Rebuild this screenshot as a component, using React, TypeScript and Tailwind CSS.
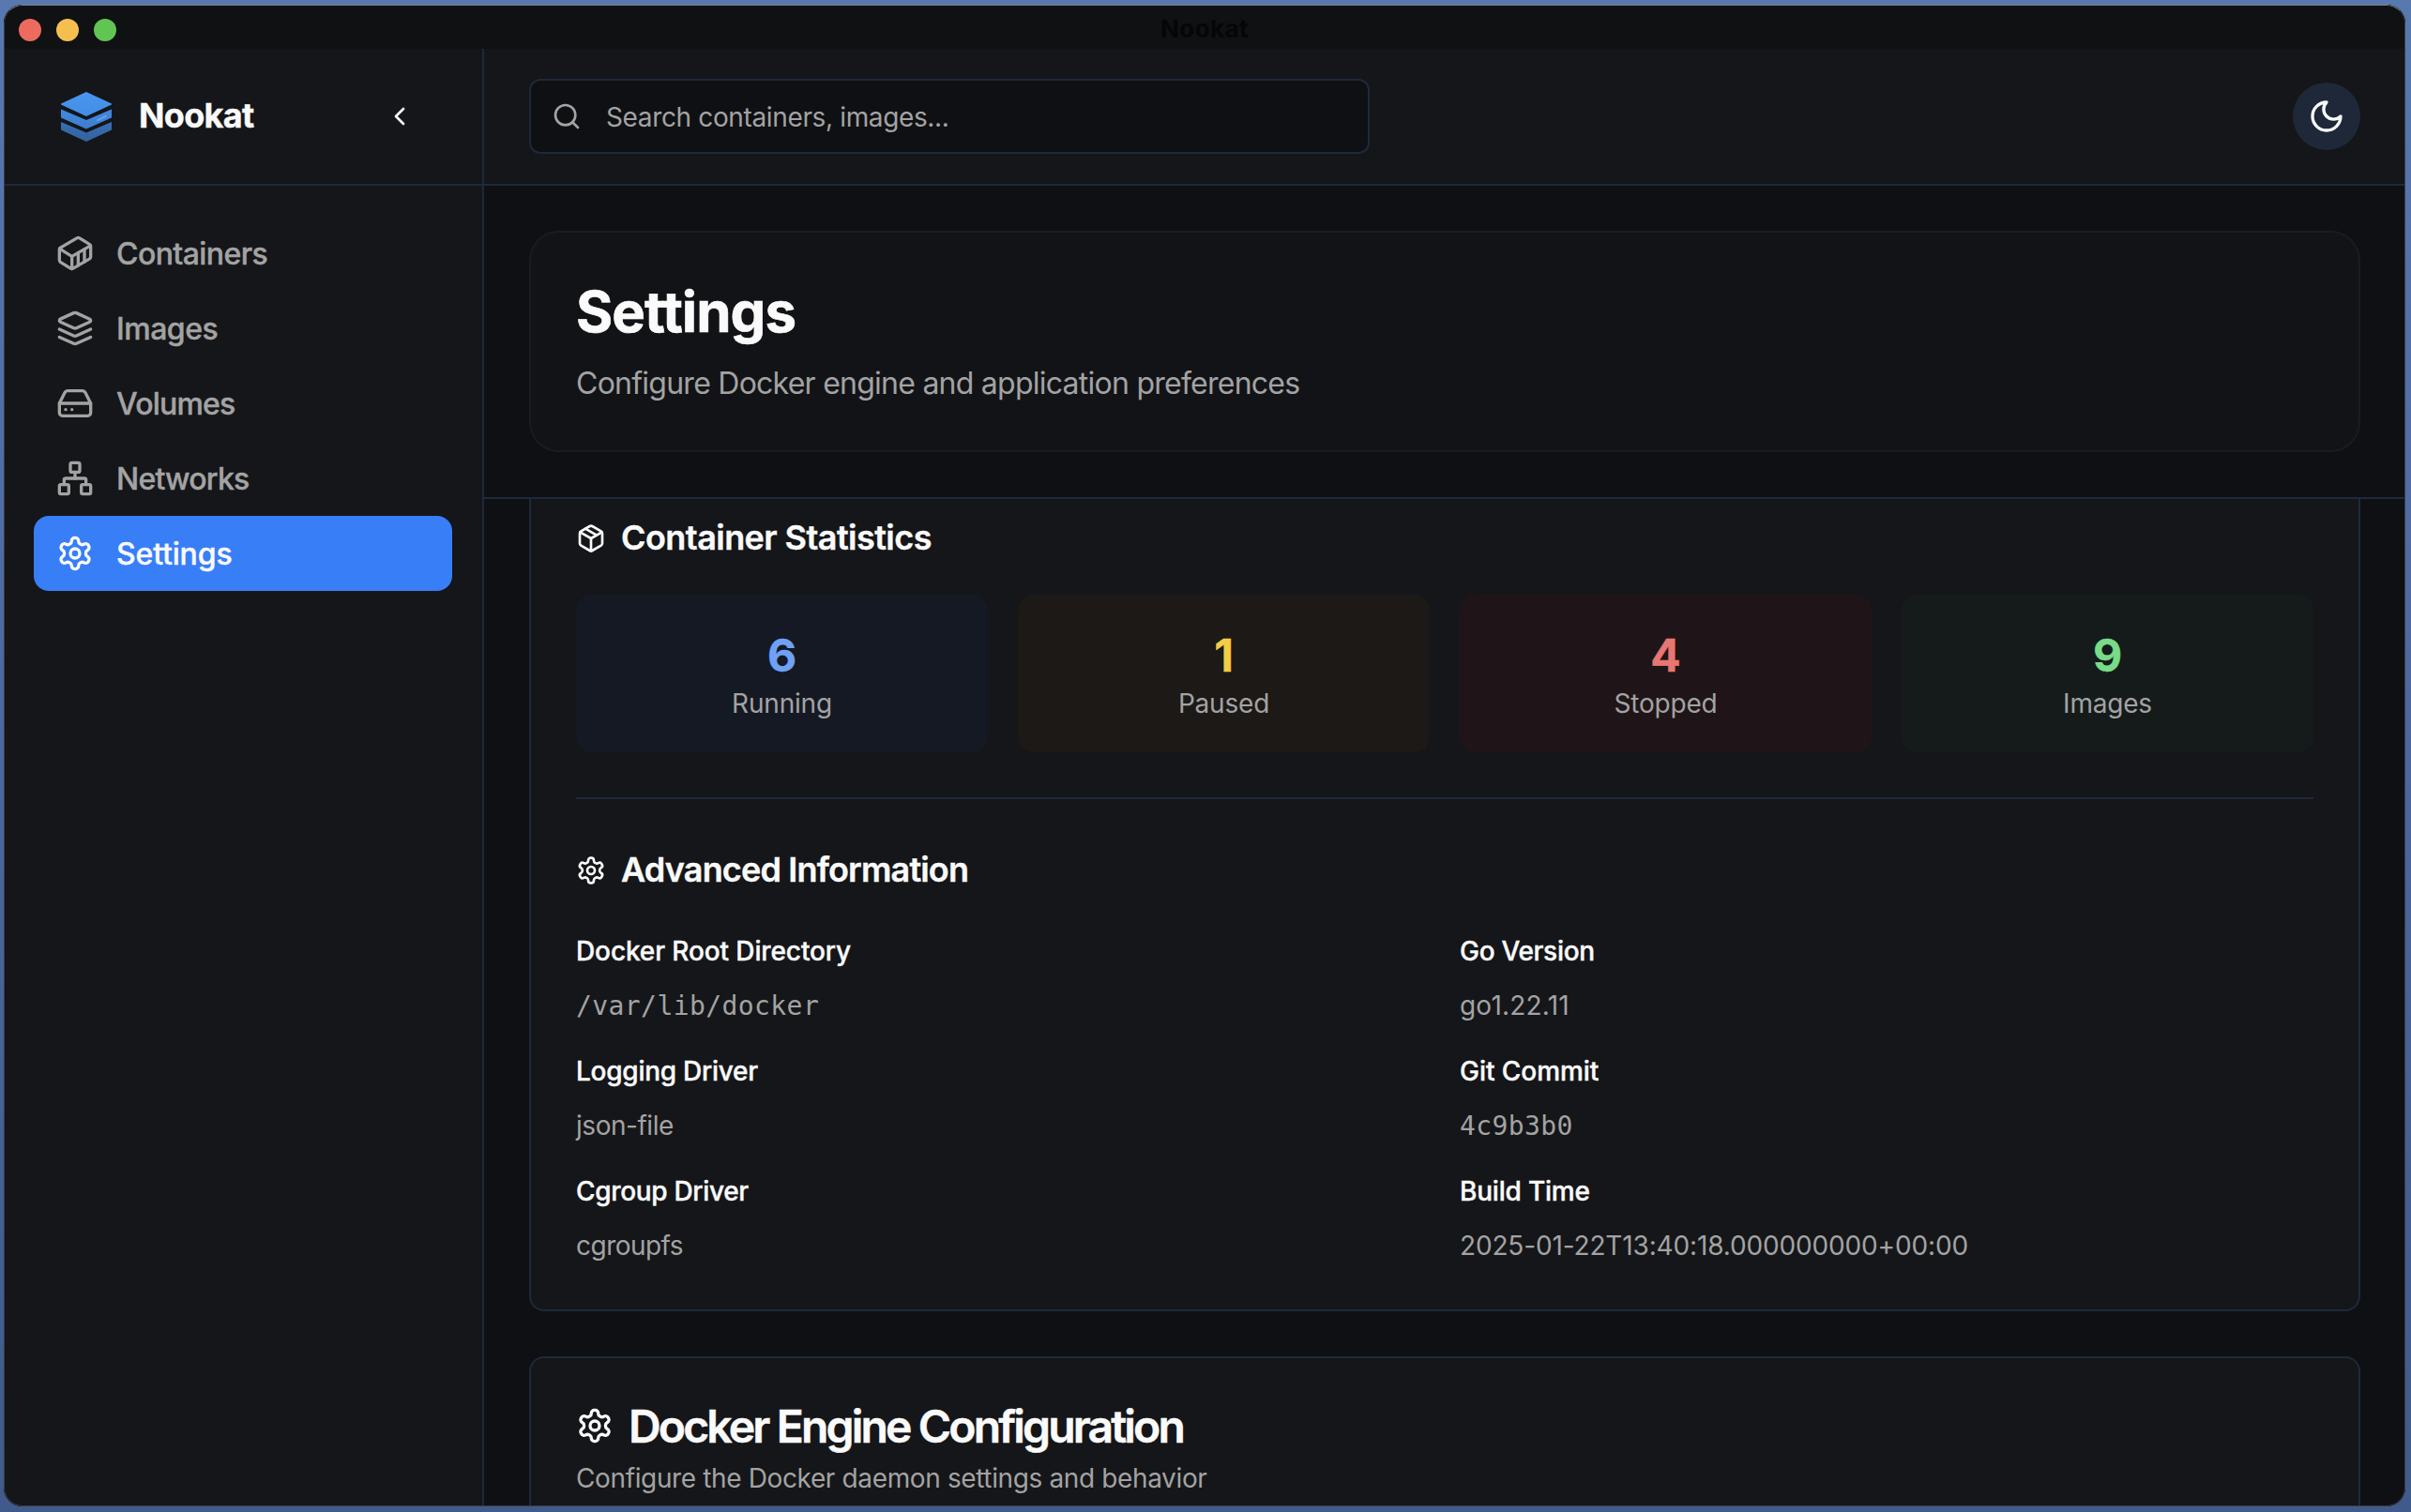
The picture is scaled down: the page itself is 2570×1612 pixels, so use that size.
import React from 'react';
import { ChevronLeft, Package, Search } from 'lucide-react';

type IconProps = { className?: string };

function Icon({ className, children }: IconProps & { children: React.ReactNode }) {
  return (
    <svg
      viewBox="0 0 24 24"
      fill="none"
      stroke="currentColor"
      strokeWidth={2}
      strokeLinecap="round"
      strokeLinejoin="round"
      className={`shrink-0 ${className ?? ''}`}
    >
      {children}
    </svg>
  );
}

function GearIcon({ className }: IconProps) {
  return (
    <Icon className={className}>
      <path d="M12.22 2h-.44a2 2 0 0 0-2 2v.18a2 2 0 0 1-1 1.73l-.43.25a2 2 0 0 1-2 0l-.15-.08a2 2 0 0 0-2.73.73l-.22.38a2 2 0 0 0 .73 2.73l.15.1a2 2 0 0 1 1 1.72v.51a2 2 0 0 1-1 1.74l-.15.09a2 2 0 0 0-.73 2.73l.22.38a2 2 0 0 0 2.73.73l.15-.08a2 2 0 0 1 2 0l.43.25a2 2 0 0 1 1 1.73V20a2 2 0 0 0 2 2h.44a2 2 0 0 0 2-2v-.18a2 2 0 0 1 1-1.73l.43-.25a2 2 0 0 1 2 0l.15.08a2 2 0 0 0 2.73-.73l.22-.39a2 2 0 0 0-.73-2.73l-.15-.08a2 2 0 0 1-1-1.74v-.5a2 2 0 0 1 1-1.74l.15-.09a2 2 0 0 0 .73-2.73l-.22-.38a2 2 0 0 0-2.73-.73l-.15.08a2 2 0 0 1-2 0l-.43-.25a2 2 0 0 1-1-1.73V4a2 2 0 0 0-2-2z" />
      <circle cx="12" cy="12" r="3" />
    </Icon>
  );
}

function ContainerIcon({ className }: IconProps) {
  return (
    <Icon className={className}>
      <path d="M22 7.7c0-.6-.4-1.2-.8-1.5l-6.3-3.9a1.72 1.72 0 0 0-1.7 0l-10.3 6c-.5.2-.9.8-.9 1.4v6.6c0 .5.4 1.2.8 1.5l6.3 3.9a1.72 1.72 0 0 0 1.7 0l10.3-6c.5-.3.9-1 .9-1.5Z" />
      <path d="M10 21.9V14L2.1 9.1" />
      <path d="m10 14 11.9-6.9" />
      <path d="M14 19.8v-8.1" />
      <path d="M18 17.5V9.4" />
    </Icon>
  );
}

function LayersIcon({ className }: IconProps) {
  return (
    <Icon className={className}>
      <path d="m12.83 2.18a2 2 0 0 0-1.66 0L2.6 6.08a1 1 0 0 0 0 1.83l8.58 3.91a2 2 0 0 0 1.66 0l8.58-3.9a1 1 0 0 0 0-1.83Z" />
      <path d="m22 17.65-9.17 4.16a2 2 0 0 1-1.66 0L2 17.65" />
      <path d="m22 12.65-9.17 4.16a2 2 0 0 1-1.66 0L2 12.65" />
    </Icon>
  );
}

function DriveIcon({ className }: IconProps) {
  return (
    <Icon className={className}>
      <path d="M22 12H2" />
      <path d="M5.45 5.11 2 12v6a2 2 0 0 0 2 2h16a2 2 0 0 0 2-2v-6l-3.45-6.89A2 2 0 0 0 16.76 4H7.24a2 2 0 0 0-1.79 1.11z" />
      <path d="M6 16h.01" />
      <path d="M10 16h.01" />
    </Icon>
  );
}

function NetworkIcon({ className }: IconProps) {
  return (
    <Icon className={className}>
      <rect x="16" y="16" width="6" height="6" rx="1" />
      <rect x="2" y="16" width="6" height="6" rx="1" />
      <rect x="9" y="2" width="6" height="6" rx="1" />
      <path d="M5 16v-3a1 1 0 0 1 1-1h12a1 1 0 0 1 1 1v3" />
      <path d="M12 12V8" />
    </Icon>
  );
}

function MoonIcon({ className }: IconProps) {
  return (
    <Icon className={className}>
      <path d="M12 3a6 6 0 0 0 9 9 9 9 0 1 1-9-9Z" />
    </Icon>
  );
}

function Logo() {
  return (
    <svg viewBox="0 0 56 56" className="size-14 shrink-0">
      <defs>
        <linearGradient id="logoTop" x1="0" y1="0" x2="0" y2="1">
          <stop offset="0" stopColor="#4896f0" />
          <stop offset="1" stopColor="#438ee6" />
        </linearGradient>
        <linearGradient id="logoMid" x1="0" y1="0" x2="0" y2="1">
          <stop offset="0" stopColor="#4289e2" />
          <stop offset="1" stopColor="#3d7dce" />
        </linearGradient>
        <linearGradient id="logoLow" x1="0" y1="0" x2="0" y2="1">
          <stop offset="0" stopColor="#386eb5" />
          <stop offset="1" stopColor="#33639f" />
        </linearGradient>
      </defs>
      <path d="M28 2 55 14.5v.9L28 28 1 15.4v-.9Z" fill="url(#logoTop)" />
      <path d="M1 20.5 28 32 55 20.5v9L28 41.5 1 29.5Z" fill="url(#logoMid)" />
      <path d="M1 34 28 45.5 55 34v8.5L28 55 1 42.5Z" fill="url(#logoLow)" />
      <path d="m40 32.2 9-4.2" stroke="#649fe4" strokeWidth="2" strokeLinecap="round" />
    </svg>
  );
}

const navItems = [
  { label: 'Containers', icon: ContainerIcon, tracking: 'tracking-[-0.58px]' },
  { label: 'Images', icon: LayersIcon, tracking: 'tracking-[-0.5px]' },
  { label: 'Volumes', icon: DriveIcon, tracking: 'tracking-[-0.8px]' },
  { label: 'Networks', icon: NetworkIcon, tracking: 'tracking-[-0.78px]' },
  { label: 'Settings', icon: GearIcon, tracking: 'tracking-[-0.16px]', active: true },
];

const stats = [
  { value: '6', label: 'Running', box: 'bg-[#151924]', color: 'text-[#6fa2f4]' },
  { value: '1', label: 'Paused', box: 'bg-[#1c1917]', color: 'text-[#f2cd46]' },
  { value: '4', label: 'Stopped', box: 'bg-[#1f1518]', color: 'text-[#e87672]' },
  { value: '9', label: 'Images', box: 'bg-[#151b1b]', color: 'text-[#78db89]' },
];

const details = [
  { label: 'Docker Root Directory', lt: 'tracking-[-0.11px]', value: '/var/lib/docker', vt: "pt-[1px] font-['DejaVu_Sans_Mono',monospace] tracking-[0.42px]" },
  { label: 'Go Version', lt: 'tracking-[-0.3px]', value: 'go1.22.11', vt: 'tracking-[0.2px]' },
  { label: 'Logging Driver', lt: 'tracking-[-0.26px]', value: 'json-file', vt: 'tracking-[-0.46px]' },
  { label: 'Git Commit', lt: 'tracking-[-0.04px]', value: '4c9b3b0', vt: "pt-[1px] font-['DejaVu_Sans_Mono',monospace] tracking-[0.39px]" },
  { label: 'Cgroup Driver', lt: 'tracking-[-0.32px]', value: 'cgroupfs', vt: 'tracking-[-0.52px]' },
  { label: 'Build Time', lt: 'tracking-[-0.2px]', value: '2025-01-22T13:40:18.000000000+00:00', vt: 'tracking-[-0.15px]' },
];

function TitleBar() {
  return (
    <div className="flex h-[47px] shrink-0 items-center bg-[#0f1113] px-4 pt-[7px]">
      <div className="flex flex-1 gap-4 pb-[1px]">
        <span className="size-6 rounded-full bg-[#ed6a5e]" />
        <span className="size-6 rounded-full bg-[#f5bf4f]" />
        <span className="size-6 rounded-full bg-[#61c554]" />
      </div>
      <span className="pb-[2px] text-[26px] font-bold leading-8 tracking-[0.4px] text-[#050607]">Nookat</span>
      <div className="flex-1" />
    </div>
  );
}

function Sidebar() {
  return (
    <aside className="flex w-[512px] shrink-0 flex-col border-r-2 border-[#1e293b] bg-[#151619]">
      <div className="flex h-[146px] shrink-0 items-center border-b-2 border-[#1e293b] pl-[60px] pr-[72px]">
        <Logo />
        <span className="ml-7 flex-1 pb-[2px] text-4xl font-bold tracking-[-0.68px] text-[#fafafa] [-webkit-text-stroke:0.4px]">Nookat</span>
        <ChevronLeft className="size-8 text-[#fafafa]" />
      </div>
      <nav className="flex flex-col px-8 py-8">
        {navItems.map(({ label, icon: NavIcon, tracking, active }) => (
          <div
            key={label}
            className={`flex h-20 items-center gap-6 rounded-[16px] px-6 ${
              active ? 'bg-[#387ef7] text-[#fafafa]' : 'text-[#a3a3a3]'
            }`}
          >
            <NavIcon className="size-10" />
            <span className={`pt-[2px] text-[32px] font-medium leading-[48px] [-webkit-text-stroke:0.4px] ${tracking}`}>{label}</span>
          </div>
        ))}
      </nav>
    </aside>
  );
}

function TopBar() {
  return (
    <header className="flex h-[146px] shrink-0 items-center justify-between border-b-2 border-[#1e293b] bg-[#151619] px-12">
      <div className="flex h-20 w-[896px] items-center gap-[26px] rounded-[12px] border-2 border-[#1e293b] bg-[#0f1013] px-[22px] text-[#a3a3a3]">
        <Search className="size-8" />
        <span className="pt-[2px] text-[28px] leading-10 tracking-[-0.36px]">Search containers, images...</span>
      </div>
      <div className="flex size-[72px] items-center justify-center rounded-full bg-[#1f2839] text-[#fafafa]">
        <MoonIcon className="size-10" />
      </div>
    </header>
  );
}

function SectionHeading({ icon, children, tracking }: { icon: React.ReactNode; children: string; tracking: string }) {
  return (
    <div className="flex h-14 items-center gap-4 text-[#fafafa]">
      {icon}
      <h3 className={`pb-[2px] text-4xl font-semibold [-webkit-text-stroke:0.4px] ${tracking}`}>{children}</h3>
    </div>
  );
}

export default function App() {
  return (
    <div className="h-[1612px] w-[2570px] overflow-hidden bg-linear-to-b from-[#5878b0] via-[#4a689e] to-[#405a8b] pb-[6px] pl-1 pr-[6px] pt-[5px] font-['Inter',sans-serif]">
      <div className="relative flex h-full flex-col overflow-hidden rounded-[20px] bg-[#0f1013]">
        <TitleBar />
        <div className="flex min-h-0 flex-1">
          <Sidebar />
          <div className="flex min-w-0 flex-1 flex-col">
            <TopBar />
            <div className="shrink-0 border-b-2 border-[#1e293b] p-12">
              <div className="rounded-[32px] border-2 border-[#171c25] bg-[#121316] p-12">
                <h1 className="text-[60px] font-bold leading-[72px] tracking-[-1px] text-[#fafafa] [-webkit-text-stroke:0.6px]">Settings</h1>
                <p className="mb-[-1px] mt-[17px] text-[32px] leading-[48px] tracking-[-0.75px] text-[#a3a3a3]">
                  Configure Docker engine and application preferences
                </p>
              </div>
            </div>
            <main className="flex min-h-0 flex-1 flex-col gap-12 overflow-hidden px-12">
              <section className="shrink-0 rounded-b-[16px] border-x-2 border-b-2 border-[#1e293b] bg-[#151619] px-12 pb-12 pt-[14px]">
                <SectionHeading icon={<Package className="size-8" />} tracking="tracking-[-0.55px]">
                  Container Statistics
                </SectionHeading>
                <div className="mt-8 grid grid-cols-4 gap-8">
                  {stats.map((s) => (
                    <div key={s.label} className={`rounded-[16px] p-8 text-center ${s.box}`}>
                      <div className={`h-16 pt-[1px] text-5xl font-bold leading-[64px] [-webkit-text-stroke:0.4px] ${s.color}`}>{s.value}</div>
                      <div className="text-[28px] leading-10 tracking-[-0.2px] text-[#a3a3a3]">{s.label}</div>
                    </div>
                  ))}
                </div>
                <div className="my-12 h-[2px] bg-[#1e293b]" />
                <SectionHeading icon={<GearIcon className="size-8" />} tracking="tracking-[-0.82px]">
                  Advanced Information
                </SectionHeading>
                <div className="mt-8 grid grid-cols-2 gap-x-8 gap-y-6">
                  {details.map((d) => (
                    <div key={d.label}>
                      <div className="flex h-12 items-center pt-[3px]">
                        <span className={`text-[28px] font-medium leading-10 text-[#fafafa] [-webkit-text-stroke:0.4px] ${d.lt}`}>{d.label}</span>
                      </div>
                      <p className={`mt-4 h-10 text-[28px] leading-10 text-[#a3a3a3] ${d.vt}`}>{d.value}</p>
                    </div>
                  ))}
                </div>
              </section>
              <section className="shrink-0 rounded-t-[16px] border-x-2 border-t-2 border-[#1e293b] bg-[#151619] px-12 pb-12 pt-12">
                <div className="flex h-12 items-center gap-4 text-[#fafafa]">
                  <GearIcon className="size-10" />
                  <h2 className="pt-[2px] text-5xl font-semibold leading-[48px] tracking-[-2.84px] [-webkit-text-stroke:0.5px]">
                    Docker Engine Configuration
                  </h2>
                </div>
                <p className="mt-3 text-[28px] leading-10 tracking-[-0.37px] text-[#a3a3a3]">
                  Configure the Docker daemon settings and behavior
                </p>
              </section>
            </main>
          </div>
        </div>
        <div className="pointer-events-none absolute inset-0 rounded-[20px] border border-[#3a3c40] border-t-[#7d8187]" />
      </div>
    </div>
  );
}
